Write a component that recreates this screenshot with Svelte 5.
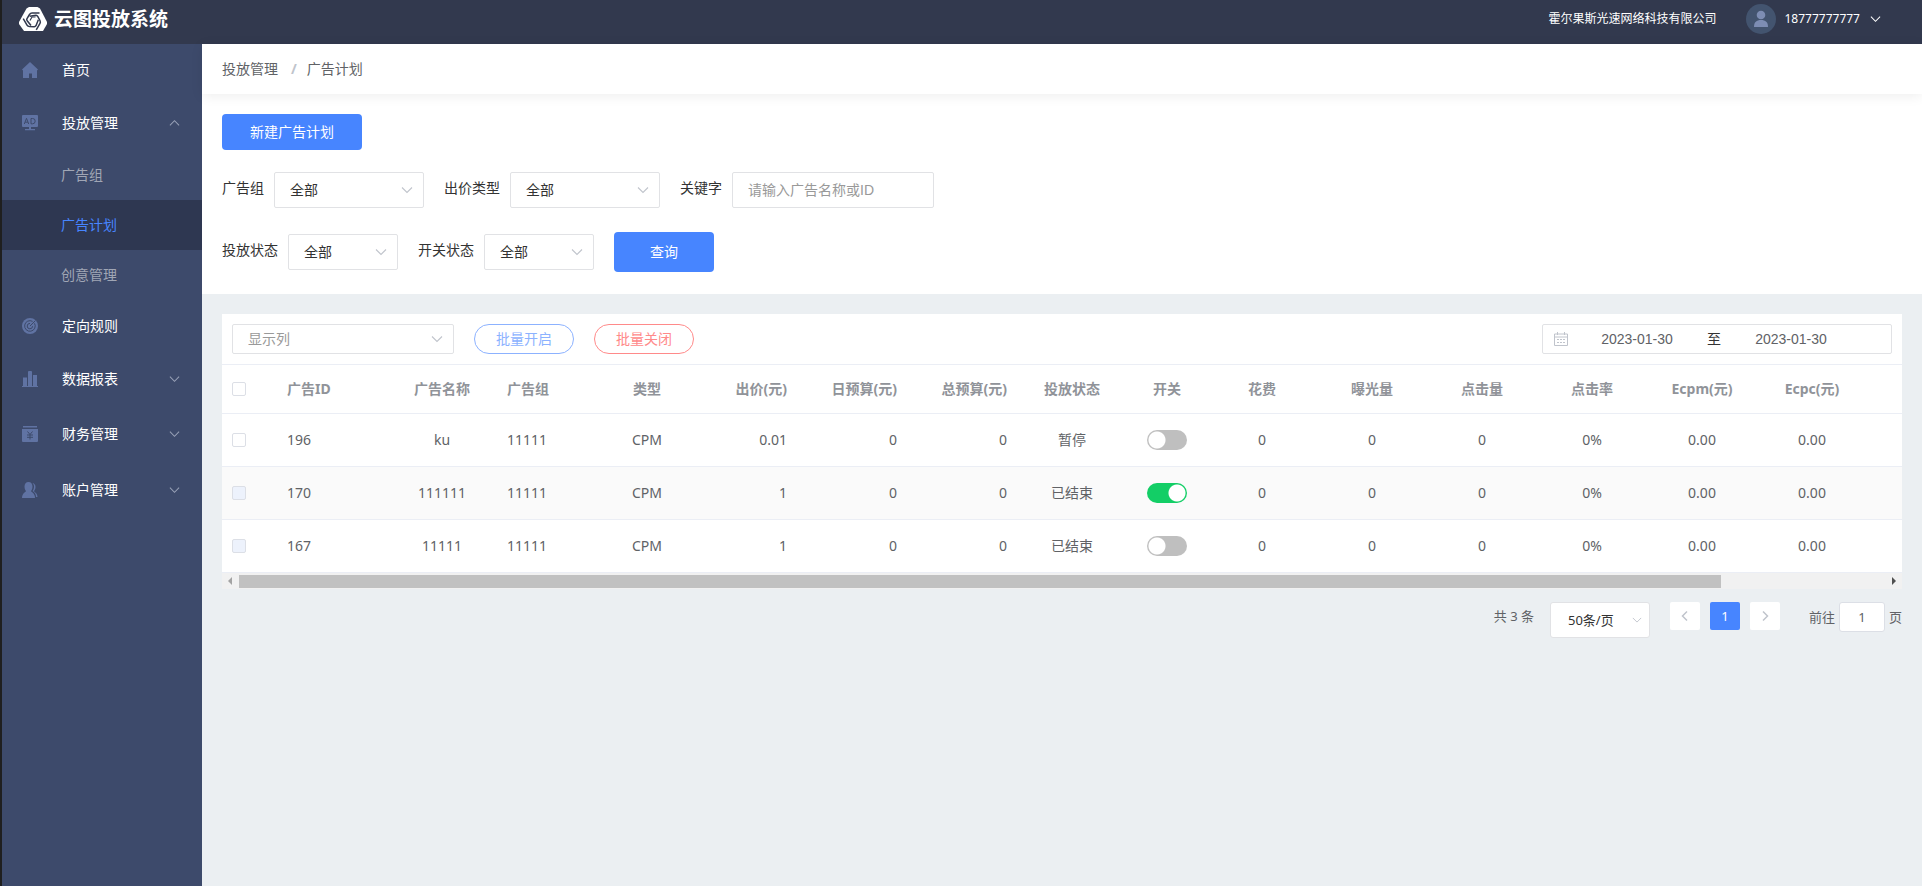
<script>
  const menu = [
    { label: '首页', icon: 'home', size: 'plain' },
    {
      label: '投放管理',
      icon: 'ad',
      size: 'group',
      open: true,
      children: [
        { label: '广告组' },
        { label: '广告计划', active: true },
        { label: '创意管理' }
      ]
    },
    { label: '定向规则', icon: 'target', size: 'plain' },
    { label: '数据报表', icon: 'chart', size: 'group', open: false },
    { label: '财务管理', icon: 'money', size: 'large', open: false },
    { label: '账户管理', icon: 'users', size: 'large', open: false }
  ];

  const columns = [
    { key: 'id', label: '广告ID', width: 110, align: 'left' },
    { key: 'name', label: '广告名称', width: 110, align: 'center' },
    { key: 'group', label: '广告组', width: 110, align: 'left' },
    { key: 'type', label: '类型', width: 80, align: 'center' },
    { key: 'price', label: '出价(元)', width: 110, align: 'right' },
    { key: 'daily', label: '日预算(元)', width: 110, align: 'right' },
    { key: 'total', label: '总预算(元)', width: 110, align: 'right' },
    { key: 'status', label: '投放状态', width: 110, align: 'center' },
    { key: 'enabled', label: '开关', width: 80, align: 'center' },
    { key: 'cost', label: '花费', width: 110, align: 'center' },
    { key: 'views', label: '曝光量', width: 110, align: 'center' },
    { key: 'clicks', label: '点击量', width: 110, align: 'center' },
    { key: 'rate', label: '点击率', width: 110, align: 'center' },
    { key: 'ecpm', label: 'Ecpm(元)', width: 110, align: 'center' },
    { key: 'ecpc', label: 'Ecpc(元)', width: 110, align: 'center' }
  ];

  const stats = { daily: 0, total: 0, cost: 0, views: 0, clicks: 0, rate: '0%', ecpm: '0.00', ecpc: '0.00' };

  let rows = $state([
    { id: 196, name: 'ku', group: '11111', type: 'CPM', price: '0.01', status: '暂停', enabled: false, locked: false, ...stats },
    { id: 170, name: '111111', group: '11111', type: 'CPM', price: '1', status: '已结束', enabled: true, locked: true, ...stats },
    { id: 167, name: '11111', group: '11111', type: 'CPM', price: '1', status: '已结束', enabled: false, locked: true, ...stats }
  ]);

  let keyword = $state('');
  let startDate = $state('2023-01-30');
  let endDate = $state('2023-01-30');
  let page = $state('1');
</script>

{#snippet chevron()}
  <svg class="chevron" viewBox="0 0 12 12" width="12" height="12" aria-hidden="true">
    <path d="M1 3.5 6 8.5 11 3.5" fill="none" stroke="currentColor" stroke-width="1.1" />
  </svg>
{/snippet}

{#snippet filterSelect(id, label, narrow)}
  <div class="field">
    <label for={id}>{label}</label>
    <div class="select" class:narrow>
      <select {id}>
        <option>全部</option>
      </select>
      {@render chevron()}
    </div>
  </div>
{/snippet}

<div class="app">
  <header class="topbar">
    <div class="brand">
      <svg viewBox="0 0 28 24" width="28" height="24" aria-hidden="true">
        <path d="M10 0h8.500l2.500 1.500 7 13.500v2l-4 7h-19l-5-7v-2l7.500-13.500z" fill="#fff" />
        <g fill="none" stroke="#32394e" stroke-width="1.500">
          <path d="M12 18.500 8 13.500Q7.500 12.500 8 11.500L10.500 7.500Q11.500 6 13 6H20.500" />
          <path d="M12 18.500 8 13.500Q7.500 12.500 8 11.500L10.500 7.500Q11.500 6 13 6H20.500" transform="rotate(120 14 13.500)" />
          <path d="M12 18.500 8 13.500Q7.500 12.500 8 11.500L10.500 7.500Q11.500 6 13 6H20.500" transform="rotate(240 14 13.500)" />
          <path d="M11 13.500 13 10H16.500" stroke-width="1.200" />
        </g>
      </svg>
      <span class="brand-name">云图投放系统</span>
    </div>
    <div class="account">
      <span class="company">霍尔果斯光速网络科技有限公司</span>
      <button type="button" class="user">
        <svg class="avatar" viewBox="0 0 30 30" width="30" height="30" aria-hidden="true">
          <circle cx="15" cy="15" r="15" fill="#43546f" />
          <circle cx="15" cy="11" r="4.300" fill="#7d8db3" />
          <path d="M8 23c0-5 2.500-7 7-7s7 2 7 7z" fill="#7d8db3" />
        </svg>
        <span>18777777777</span>
        {@render chevron()}
      </button>
    </div>
  </header>

  <div class="body">
    <nav class="sidebar">
      <ul>
        {#each menu as item}
          <li>
            <a href="#{item.icon}" class="menu-item {item.size}">
              <svg class="menu-icon" viewBox="0 0 16 16" width="16" height="16" aria-hidden="true">
                {#if item.icon === 'home'}
                  <path d="M8 0 16 7.500 15 8.500V16H10V11.500H7V16H1V8.500L0 7.500z" />
                {:else if item.icon === 'ad'}
                  <path d="M1 0h14q1 0 1 1v10q0 1-1 1H9v2h4v1.300H3V14h4v-2H1q-1 0-1-1V1q0-1 1-1z" />
                  <path class="cut" d="M2.300 9 4.500 3.300 6.700 9M3.200 7.200h2.600M9 3.500v5.300h1.500q2.700 0 2.700-2.700t-2.700-2.600z" />
                {:else if item.icon === 'target'}
                  <circle cx="8" cy="8" r="8" />
                  <path class="cut" d="M12.500 5.300A5.300 5.300 0 1 1 10.600 3.400M10.600 8.200A2.700 2.700 0 1 1 8 5.400M8 8l5.500-5.500" />
                {:else if item.icon === 'chart'}
                  <path d="M1 6.500h4V15h1V1q0-1 1-1h2q1 0 1 1v14h1V4h4v11h1v1H0v-1h1z" />
                {:else if item.icon === 'money'}
                  <path d="M1 0h14v1.500H1zM0 3h16v12q0 1-1 1H1q-1 0-1-1z" />
                  <path class="cut" d="M5.500 5.500 8 8.500l2.500-3M8 8.500V13.500M5 9h6M5 11.300h6" />
                {:else}
                  <path d="M6.500 0C9 0 10.500 2 10.500 4.500S9.500 8.500 9 9c0 1 4 2 4 7H0c0-5 4-6 4-7-.5-.5-1.500-2-1.500-4.500S4 0 6.500 0z" />
                  <path d="M10.500 1c2 .5 3 2 3 4s-1 3.500-1.500 4c0 1 3.500 2 3.500 6H14c0-3-1.500-5-3.500-6 .8-1 1.500-2.500 1.500-4.500S11.300 2 10.500 1z" />
                {/if}
              </svg>
              <span class="menu-label">{item.label}</span>
              {#if item.open !== undefined}
                <span class="arrow" class:open={item.open}>{@render chevron()}</span>
              {/if}
            </a>
            {#if item.children}
              <ul>
                {#each item.children as child}
                  <li><a href="#{child.label}" class="sub-item" class:active={child.active}>{child.label}</a></li>
                {/each}
              </ul>
            {/if}
          </li>
        {/each}
      </ul>
    </nav>

    <main>
      <nav class="breadcrumb">
        <a href="#manage">投放管理</a>
        <span class="slash">/</span>
        <a href="#plan">广告计划</a>
      </nav>

      <section class="filters">
        <button type="button" class="primary create">新建广告计划</button>
        <div class="filter-row">
          {@render filterSelect('ad-group', '广告组', false)}
          {@render filterSelect('bid-type', '出价类型', false)}
          <div class="field">
            <label for="keyword">关键字</label>
            <input id="keyword" class="keyword" type="text" placeholder="请输入广告名称或ID" bind:value={keyword} />
          </div>
        </div>
        <div class="filter-row">
          {@render filterSelect('run-status', '投放状态', true)}
          {@render filterSelect('switch-status', '开关状态', true)}
          <button type="button" class="primary search">查询</button>
        </div>
      </section>

      <section class="content">
        <div class="card">
          <div class="toolbar">
            <div class="select column-select">
              <select aria-label="显示列">
                <option>显示列</option>
              </select>
              {@render chevron()}
            </div>
            <button type="button" class="pill on">批量开启</button>
            <button type="button" class="pill off">批量关闭</button>
            <div class="date-range">
              <svg viewBox="0 0 14 14" width="14" height="14" aria-hidden="true">
                <path d="M.5 2h13v11.500H.5zM.5 5h13M3.500 0v3M10.500 0v3M3 7.500h2M6 7.500h2M9 7.500h2M3 10.500h2M6 10.500h2M9 10.500h2" fill="none" stroke="#c0c4cc" />
              </svg>
              <input type="text" aria-label="开始日期" bind:value={startDate} />
              <span class="to">至</span>
              <input type="text" aria-label="结束日期" bind:value={endDate} />
            </div>
          </div>

          <div class="table-wrap">
            <table>
              <colgroup>
                <col style="width: 55px" />
                {#each columns as col}
                  <col style="width: {col.width}px" />
                {/each}
                <col />
              </colgroup>
              <thead>
                <tr>
                  <th class="left"><input type="checkbox" aria-label="全选" /></th>
                  {#each columns as col}
                    <th class={col.align}>{col.label}</th>
                  {/each}
                  <th></th>
                </tr>
              </thead>
              <tbody>
                {#each rows as row}
                  <tr>
                    <td class="left"><input type="checkbox" aria-label="选择 {row.id}" disabled={row.locked} /></td>
                    {#each columns as col}
                      <td class={col.align}>
                        {#if col.key === 'enabled'}
                          <input type="checkbox" role="switch" class="switch" aria-label="开关 {row.id}" bind:checked={row.enabled} />
                        {:else}
                          {row[col.key]}
                        {/if}
                      </td>
                    {/each}
                    <td></td>
                  </tr>
                {/each}
              </tbody>
            </table>
          </div>

          <div class="scrollbar" aria-hidden="true">
            <span class="scroll-arrow prev"></span>
            <div class="scroll-track"><div class="scroll-thumb"></div></div>
            <span class="scroll-arrow next"></span>
          </div>
        </div>

        <div class="pagination">
          <span class="count">共 3 条</span>
          <div class="select page-size">
            <select aria-label="每页条数">
              <option>50条/页</option>
            </select>
            {@render chevron()}
          </div>
          <div class="pager">
            <button type="button" aria-label="上一页">
              <svg viewBox="0 0 12 12" width="12" height="12"><path d="M8 1.500 3.500 6 8 10.500" fill="none" stroke="currentColor" stroke-width="1.500" /></svg>
            </button>
            <button type="button" class="current">1</button>
            <button type="button" aria-label="下一页">
              <svg viewBox="0 0 12 12" width="12" height="12"><path d="M4 1.500 8.500 6 4 10.500" fill="none" stroke="currentColor" stroke-width="1.500" /></svg>
            </button>
          </div>
          <label class="jump">前往<input type="text" bind:value={page} />页</label>
        </div>
      </section>
    </main>
  </div>
</div>

<style>
  :global(body) {
    margin: 0;
  }

  .app {
    display: flex;
    flex-direction: column;
    min-height: 100vh;
    box-sizing: border-box;
    border-left: 2px solid #1f1f1f;
    font-family: 'Noto Sans', 'Noto Sans CJK SC', sans-serif;
    font-size: 14px;
    line-height: 20px;
    color: #333;
    background: #ebeff2;
  }

  .app :global(*) {
    box-sizing: border-box;
  }

  a {
    color: inherit;
    text-decoration: none;
  }

  ul {
    list-style: none;
    margin: 0;
    padding: 0;
  }

  button,
  input,
  select {
    margin: 0;
    font: inherit;
    color: inherit;
  }

  button {
    padding: 0;
    border: 0;
    cursor: pointer;
  }

  .chevron {
    flex: none;
    display: block;
  }

  /* top bar */
  .topbar {
    display: flex;
    justify-content: space-between;
    align-items: center;
    height: 44px;
    padding: 0 41px 6px 17px;
    background: #32394e;
    color: #fff;
  }

  .brand {
    display: flex;
    align-items: center;
    gap: 7px;
  }

  .brand svg {
    display: block;
  }

  .brand-name {
    font-size: 19px;
    font-weight: 700;
    line-height: 30px;
  }

  .account {
    display: flex;
    align-items: center;
    gap: 30px;
    font-size: 12px;
  }

  .user {
    display: flex;
    align-items: center;
    gap: 8px;
    background: none;
  }

  .user .chevron {
    width: 11px;
    margin-left: 2px;
  }

  .avatar {
    display: block;
  }

  .body {
    flex: 1;
    display: flex;
  }

  /* sidebar */
  .sidebar {
    flex: none;
    width: 200px;
    background: #3d4a6b;
    color: #fff;
  }

  .menu-item {
    display: flex;
    align-items: center;
    height: 52px;
    padding: 0 22px 0 20px;
  }

  .menu-item.group {
    height: 54px;
  }

  .menu-item.large {
    height: 56px;
  }

  .menu-icon {
    flex: none;
    margin-right: 24px;
    fill: #6073a3;
  }

  .menu-icon .cut {
    fill: none;
    stroke: #3d4a6b;
    stroke-width: 1;
  }

  .menu-label {
    flex: 1;
  }

  .arrow {
    color: #98a1b7;
  }

  .arrow .chevron {
    width: 11px;
  }

  .arrow.open .chevron {
    transform: rotate(180deg);
  }

  .sub-item {
    display: block;
    padding-left: 59px;
    line-height: 50px;
    color: #a0a6b5;
  }

  .sub-item.active {
    background: #2e3751;
    color: #4785ff;
  }

  /* main column */
  main {
    flex: 1;
    min-width: 0;
  }

  .breadcrumb {
    position: relative;
    display: flex;
    align-items: center;
    height: 50px;
    padding: 0 20px;
    background: #fff;
    color: #606266;
    box-shadow: 0 2px 12px rgba(0, 0, 0, 0.07);
  }

  .slash {
    margin: 0 10px 0 13px;
    font-weight: 700;
    color: #c0c4cc;
  }

  .filters {
    padding: 20px 20px 22px;
    background: #fff;
  }

  .primary {
    border-radius: 4px;
    background: #4785ff;
    color: #fff;
  }

  .create {
    display: block;
    width: 140px;
    height: 36px;
  }

  .search {
    width: 100px;
    height: 40px;
  }

  .filter-row {
    display: flex;
    flex-wrap: wrap;
    align-items: center;
    gap: 20px;
    margin-top: 22px;
  }

  .filter-row + .filter-row {
    margin-top: 24px;
  }

  .field {
    display: flex;
    align-items: center;
    gap: 10px;
  }

  .field label {
    padding-bottom: 4px;
  }

  .select {
    display: grid;
    align-items: center;
    width: 150px;
    height: 36px;
  }

  .select.narrow {
    width: 110px;
  }

  .select select {
    grid-area: 1 / 1;
    width: 100%;
    height: 100%;
    padding: 0 15px;
    border: 1px solid #e1e2e5;
    border-radius: 2px;
    background: #fff;
    appearance: none;
  }

  .select .chevron {
    grid-area: 1 / 1;
    justify-self: end;
    margin-right: 11px;
    color: #c0c4cc;
    pointer-events: none;
  }

  .keyword {
    width: 202px;
    height: 36px;
    padding: 0 15px;
    border: 1px solid #e1e2e5;
    border-radius: 2px;
    font-family: 'Liberation Sans', 'Noto Sans CJK SC', sans-serif;
  }

  .keyword::placeholder {
    color: #999;
  }

  /* table card */
  .content {
    padding: 20px;
  }

  .card {
    background: #fff;
  }

  .toolbar {
    display: flex;
    align-items: center;
    gap: 20px;
    height: 50px;
    padding: 0 10px;
  }

  .select.column-select {
    width: 222px;
    height: 30px;
    color: #999;
  }

  .pill {
    width: 100px;
    height: 30px;
    border: 1px solid currentColor;
    border-radius: 15px;
    background: #fff;
  }

  .pill.on {
    color: #8cb2ff;
  }

  .pill.off {
    color: #ff8a8a;
  }

  .date-range {
    display: flex;
    align-items: center;
    width: 350px;
    height: 30px;
    margin-left: auto;
    padding-left: 11px;
    border: 1px solid #e1e2e5;
    border-radius: 2px;
    font-family: 'Liberation Sans', 'Noto Sans CJK SC', sans-serif;
  }

  .date-range svg {
    flex: none;
    margin-right: 10px;
  }

  .date-range input {
    width: 118px;
    padding: 0;
    border: 0;
    background: none;
    color: #606266;
    text-align: center;
  }

  .to {
    width: 36px;
    text-align: center;
  }

  .table-wrap {
    overflow: hidden;
    border-top: 1px solid #ebeef5;
  }

  table {
    width: 100%;
    min-width: 1645px;
    table-layout: fixed;
    border-spacing: 0;
    color: #606266;
  }

  th,
  td {
    padding: 0 10px;
    border-bottom: 1px solid #ebeef5;
    white-space: nowrap;
  }

  th {
    height: 49px;
    color: #909399;
    font-weight: 700;
  }

  td {
    height: 53px;
  }

  tbody tr:nth-child(even) {
    background: #fafafa;
  }

  .left {
    text-align: left;
  }

  .center {
    text-align: center;
  }

  .right {
    text-align: right;
  }

  table input[type='checkbox'] {
    display: block;
    width: 14px;
    height: 14px;
    border: 1px solid #dcdfe6;
    border-radius: 2px;
    background: #fff;
    appearance: none;
  }

  table input[type='checkbox']:disabled {
    background: #edf2fc;
  }

  table input.switch[type='checkbox'] {
    width: 40px;
    height: 20px;
    margin: 0 auto;
    border: 0;
    border-radius: 10px;
    background: radial-gradient(circle at 10px 10px, #fff 8px, #bfbfbf 9px);
  }

  table input.switch[type='checkbox']:checked {
    background: radial-gradient(circle at 30px 10px, #fff 8px, #13ce66 9px);
  }

  .scrollbar {
    display: flex;
    align-items: center;
    justify-content: space-between;
    height: 16px;
    background: #f1f1f1;
  }

  .scroll-track {
    flex: 1;
    margin: 0 6px 0 7px;
  }

  .scroll-thumb {
    width: 90%;
    height: 13px;
    background: #c1c1c1;
  }

  .scroll-arrow {
    border: 4px solid transparent;
  }

  .scroll-arrow.prev {
    margin-left: 2px;
    border-right-color: #a3a3a3;
  }

  .scroll-arrow.next {
    margin-right: 2px;
    border-left-color: #505050;
  }

  /* pagination */
  .pagination {
    display: flex;
    justify-content: flex-end;
    align-items: flex-start;
    margin-top: 13px;
    font-size: 13px;
    line-height: 28px;
    color: #606266;
  }

  .select.page-size {
    width: 100px;
    margin: 0 20px 0 16px;
    color: #333;
  }

  .page-size select {
    padding: 0 17px;
    border-radius: 3px;
  }

  .page-size .chevron {
    width: 10px;
    margin-right: 8px;
  }

  .pager {
    display: flex;
    gap: 10px;
  }

  .pager button {
    display: flex;
    align-items: center;
    justify-content: center;
    width: 30px;
    height: 28px;
    border-radius: 2px;
    background: #fff;
    color: #c0c4cc;
  }

  .pager .current {
    background: #4785ff;
    color: #fff;
  }

  .jump {
    display: flex;
    align-items: center;
    gap: 4px;
    margin-left: 29px;
  }

  .jump input {
    width: 46px;
    height: 30px;
    padding: 0;
    border: 1px solid #dcdfe6;
    border-radius: 3px;
    background: #fff;
    text-align: center;
  }
</style>
